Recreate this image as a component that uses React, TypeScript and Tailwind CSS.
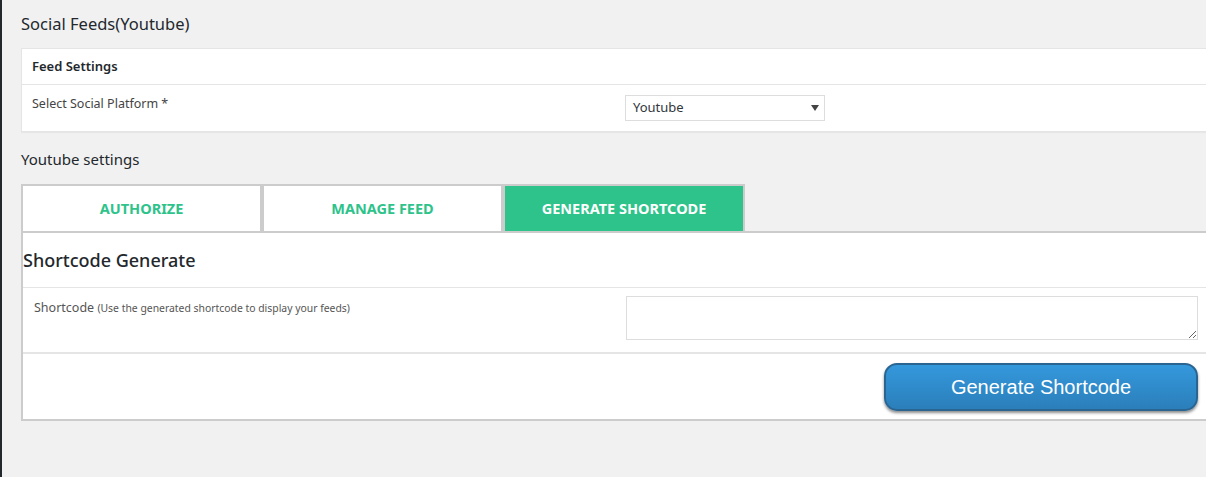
import { useState } from "react";

const tabs = ["Authorize", "Manage Feed", "Generate Shortcode"];

function FeedSettings() {
  return (
    <div className="w-[1200px] bg-white border border-[#e5e5e5] shadow-[0_1px_1px_rgba(0,0,0,0.04)]">
      <div className="h-[36px] px-[10px] flex items-center border-b border-[#e5e5e5]">
        <h3 className="text-[13px] font-semibold text-[#23282d]">Feed Settings</h3>
      </div>
      <div className="h-[46px] flex pl-[10px]">
        <label className="w-[593px] pt-[10px] text-[12.5px] text-[#444]">Select Social Platform *</label>
        <div className="pt-[10px]">
          <div className="w-[200px] h-[26px] border border-[#ddd] bg-white flex items-center justify-between pl-[7px] pr-[5px]">
            <span className="text-[13px] text-[#32373c]">Youtube</span>
            <svg width="8" height="6" viewBox="0 0 8 6">
              <path d="M0 0h8L4 6z" fill="#444" />
            </svg>
          </div>
        </div>
      </div>
    </div>
  );
}

function ShortcodePanel() {
  return (
    <div className="w-[1200px] bg-white border-2 border-[#ccc] border-r-0">
      <h2 className="h-[55px] flex items-center text-[18px] font-medium text-[#23282d] border-b border-[#e5e5e5]">Shortcode Generate</h2>
      <div className="h-[66px] flex border-b-2 border-[#e5e5e5]">
        <div className="w-[603px] pl-[11px] pt-[11px] text-[12.5px] text-[#555]">
          Shortcode <span className="text-[10.4px]">(Use the generated shortcode to display your feeds)</span>
        </div>
        <div className="pt-[8px]">
          <textarea className="w-[572px] h-[44px] border border-[#ddd] bg-white resize-y block" readOnly />
        </div>
      </div>
      <div className="h-[65px] flex items-center pl-[861px]">
        <button className="w-[314px] h-[48px] rounded-[13px] border-2 border-[#2a6592] bg-gradient-to-b from-[#3498dc] to-[#2b7fba] text-white text-[20px] shadow-[0_2px_3px_rgba(0,0,0,0.45)] [font-family:'Liberation_Sans',Arial,sans-serif]">
          Generate Shortcode
        </button>
      </div>
    </div>
  );
}

export default function App() {
  const [active, setActive] = useState(2);
  return (
    <div className="w-[1206px] h-[477px] overflow-hidden bg-[#f1f1f1] flex [font-family:'Noto_Sans',sans-serif]">
      <div className="w-[2px] bg-[#23282d] shrink-0" />
      <div className="pl-[19px] flex flex-col">
        <h1 className="h-[48px] flex items-center text-[16.5px] text-[#23282d]">Social Feeds(Youtube)</h1>
        <FeedSettings />
        <h2 className="h-[52px] flex items-center pt-[2px] text-[15px] text-[#23282d]">Youtube settings</h2>
        <div className="flex">
          {tabs.map((t, i) => (
            <button
              key={t}
              onClick={() => setActive(i)}
              className={`h-[49px] -mb-[2px] border-2 border-[#ccc] uppercase text-[14.5px] font-bold ${
                active === i ? "bg-[#2dc38a] text-white w-[242px]" : "bg-white text-[#2dc38a] w-[241px]"
              }`}
            >
              {t}
            </button>
          ))}
        </div>
        <ShortcodePanel />
      </div>
    </div>
  );
}
